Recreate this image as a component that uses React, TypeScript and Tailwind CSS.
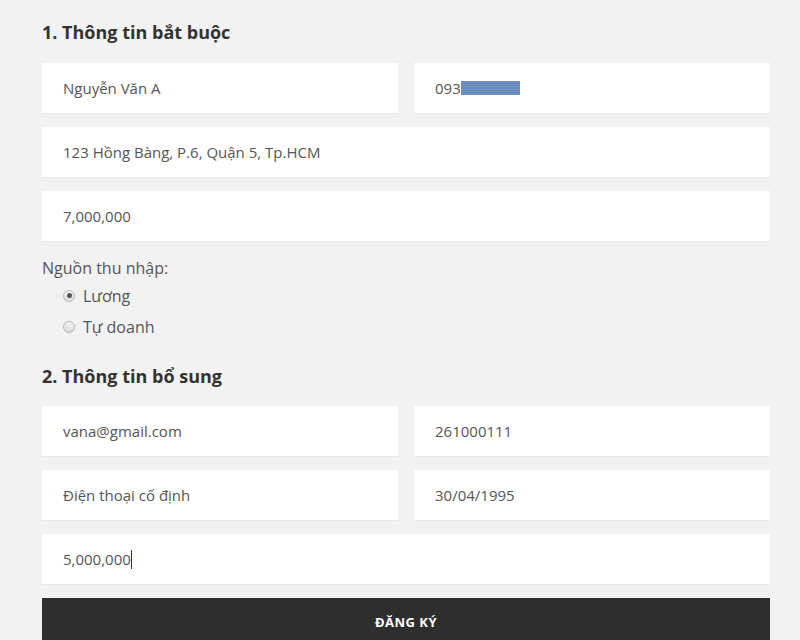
import React from "react";

const font = { fontFamily: '"Open Sans", "Noto Sans", sans-serif' };

function Field({ children, className = "" }: { children: React.ReactNode; className?: string }) {
  return (
    <div
      className={
        "h-[50px] bg-white flex items-center pl-[21px] text-[15px] text-[#555] shadow-[0_1px_1px_rgba(0,0,0,0.04)] " +
        className
      }
    >
      {children}
    </div>
  );
}

function Radio({ checked, label }: { checked?: boolean; label: string }) {
  return (
    <div className="flex items-center h-[31px] pl-[21px]">
      <span className="w-[12px] h-[12px] rounded-full border border-[#b5b5b5] bg-gradient-to-b from-[#f4f4f4] to-[#dcdcdc] flex items-center justify-center">
        {checked && <span className="w-[5px] h-[5px] rounded-full bg-[#555]" />}
      </span>
      <span className="ml-[8px] text-[16px] text-[#555]">{label}</span>
    </div>
  );
}

export default function App() {
  return (
    <div className="w-[800px] h-[640px] bg-[#f2f2f2] overflow-hidden" style={font}>
      <div className="ml-[42px] w-[728px] pt-[18px]">
        <h2 className="text-[18px] font-bold text-[#333] leading-[28px]">1. Thông tin bắt buộc</h2>
        <div className="mt-[17px] flex flex-col gap-[14px]">
          <div className="grid grid-cols-2 gap-[16px]">
            <Field>Nguyễn Văn A</Field>
            <Field>
              093
              <span className="inline-block w-[59px] h-[14px] bg-[#6c8ebc]" />
            </Field>
          </div>
          <Field>123 Hồng Bàng, P.6, Quận 5, Tp.HCM</Field>
          <Field>7,000,000</Field>
        </div>
        <div className="mt-[16px] text-[16px] text-[#555] leading-[22px]">Nguồn thu nhập:</div>
        <div className="mt-[1px]">
          <Radio checked label="Lương" />
          <Radio label="Tự doanh" />
        </div>
        <h2 className="mt-[20px] text-[18px] font-bold text-[#333] leading-[28px]">2. Thông tin bổ sung</h2>
        <div className="mt-[16px] flex flex-col gap-[14px]">
          <div className="grid grid-cols-2 gap-[16px]">
            <Field>vana@gmail.com</Field>
            <Field>261000111</Field>
          </div>
          <div className="grid grid-cols-2 gap-[16px]">
            <Field>Điện thoại cố định</Field>
            <Field>30/04/1995</Field>
          </div>
          <Field>
            5,000,000
            <span className="inline-block w-[1px] h-[19px] bg-[#333]" />
          </Field>
        </div>
        <div className="mt-[14px] h-[50px] bg-[#2e2e2e] flex items-center justify-center text-white text-[13px] font-bold tracking-[0.5px]">
          ĐĂNG KÝ
        </div>
      </div>
    </div>
  );
}
